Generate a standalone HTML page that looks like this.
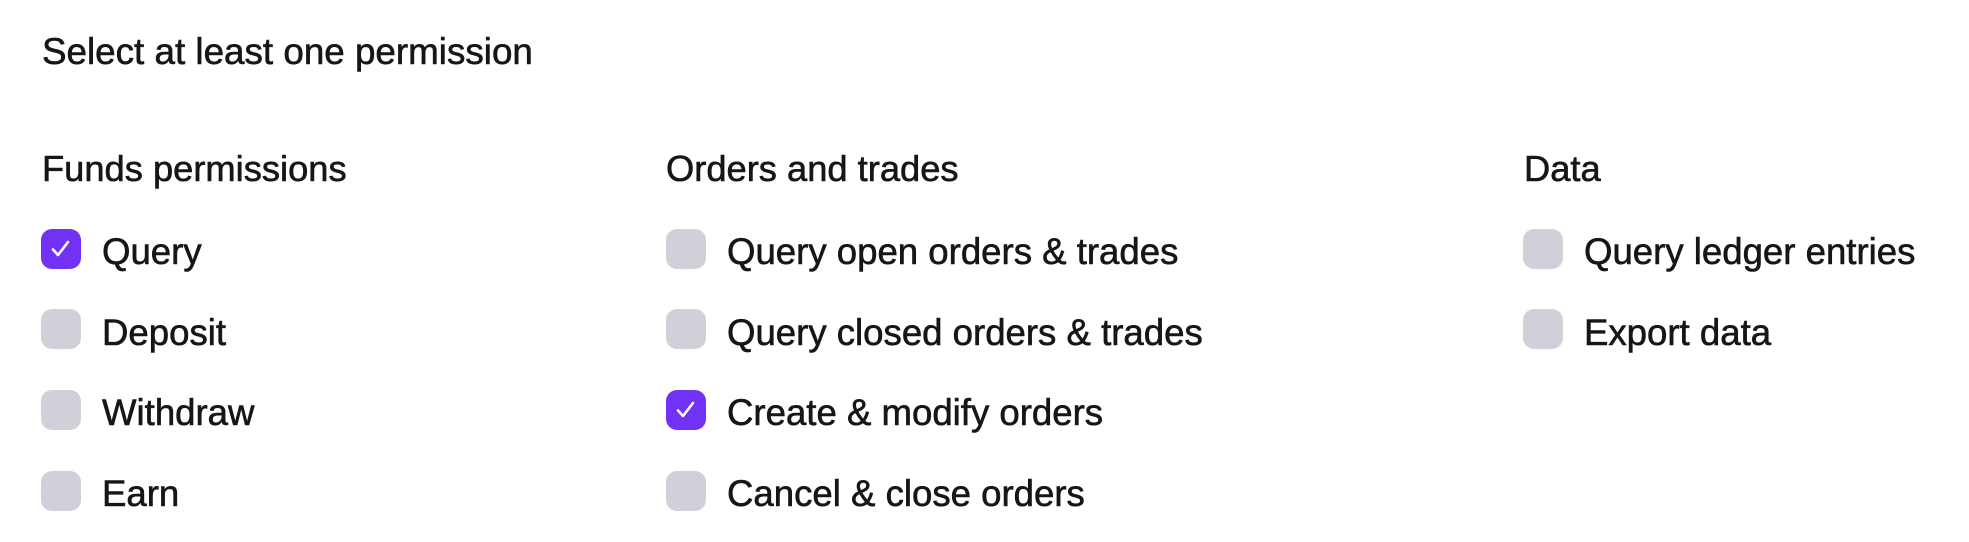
<!DOCTYPE html>
<html><head><meta charset="utf-8"><style>
html,body{margin:0;padding:0;background:#fff;}
body{width:1969px;height:542px;position:relative;font-family:"Liberation Sans",sans-serif;color:#16161a;overflow:hidden;}
.t{position:absolute;white-space:nowrap;line-height:40px;-webkit-text-stroke:0.6px #16161a;}
.title{left:42px;top:32px;font-size:36.8px;}
.h{font-size:36.3px;top:149px;}
.cb{position:absolute;width:40px;height:40px;border-radius:11px;background:#d0d0d9;}
.cb.on{background:#7132f5;}
.cb.on svg{position:absolute;left:0;top:0;}
.it{font-size:36.6px;}
</style></head><body>
<div class="t title">Select at least one permission</div>
<div class="t h" style="left:42px">Funds permissions</div>
<div class="t h" style="left:666px">Orders and trades</div>
<div class="t h" style="left:1524px">Data</div>

<div class="cb on" style="left:41px;top:229px"><svg width="40" height="40" viewBox="0 0 40 40"><path d="M12 20.5l5 5.5 10-13" fill="none" stroke="#fff" stroke-width="2.6" stroke-linecap="round" stroke-linejoin="round"/></svg></div>
<div class="t it" style="left:102px;top:232px">Query</div>
<div class="cb" style="left:41px;top:309px"></div>
<div class="t it" style="left:102px;top:313px">Deposit</div>
<div class="cb" style="left:41px;top:390px"></div>
<div class="t it" style="left:102px;top:393px">Withdraw</div>
<div class="cb" style="left:41px;top:471px"></div>
<div class="t it" style="left:102px;top:474px">Earn</div>

<div class="cb" style="left:666px;top:229px"></div>
<div class="t it" style="left:727px;top:232px">Query open orders &amp; trades</div>
<div class="cb" style="left:666px;top:309px"></div>
<div class="t it" style="left:727px;top:313px">Query closed orders &amp; trades</div>
<div class="cb on" style="left:666px;top:390px"><svg width="40" height="40" viewBox="0 0 40 40"><path d="M12 20.5l5 5.5 10-13" fill="none" stroke="#fff" stroke-width="2.6" stroke-linecap="round" stroke-linejoin="round"/></svg></div>
<div class="t it" style="left:727px;top:393px">Create &amp; modify orders</div>
<div class="cb" style="left:666px;top:471px"></div>
<div class="t it" style="left:727px;top:474px">Cancel &amp; close orders</div>

<div class="cb" style="left:1523px;top:229px"></div>
<div class="t it" style="left:1584px;top:232px">Query ledger entries</div>
<div class="cb" style="left:1523px;top:309px"></div>
<div class="t it" style="left:1584px;top:313px">Export data</div>
</body></html>
